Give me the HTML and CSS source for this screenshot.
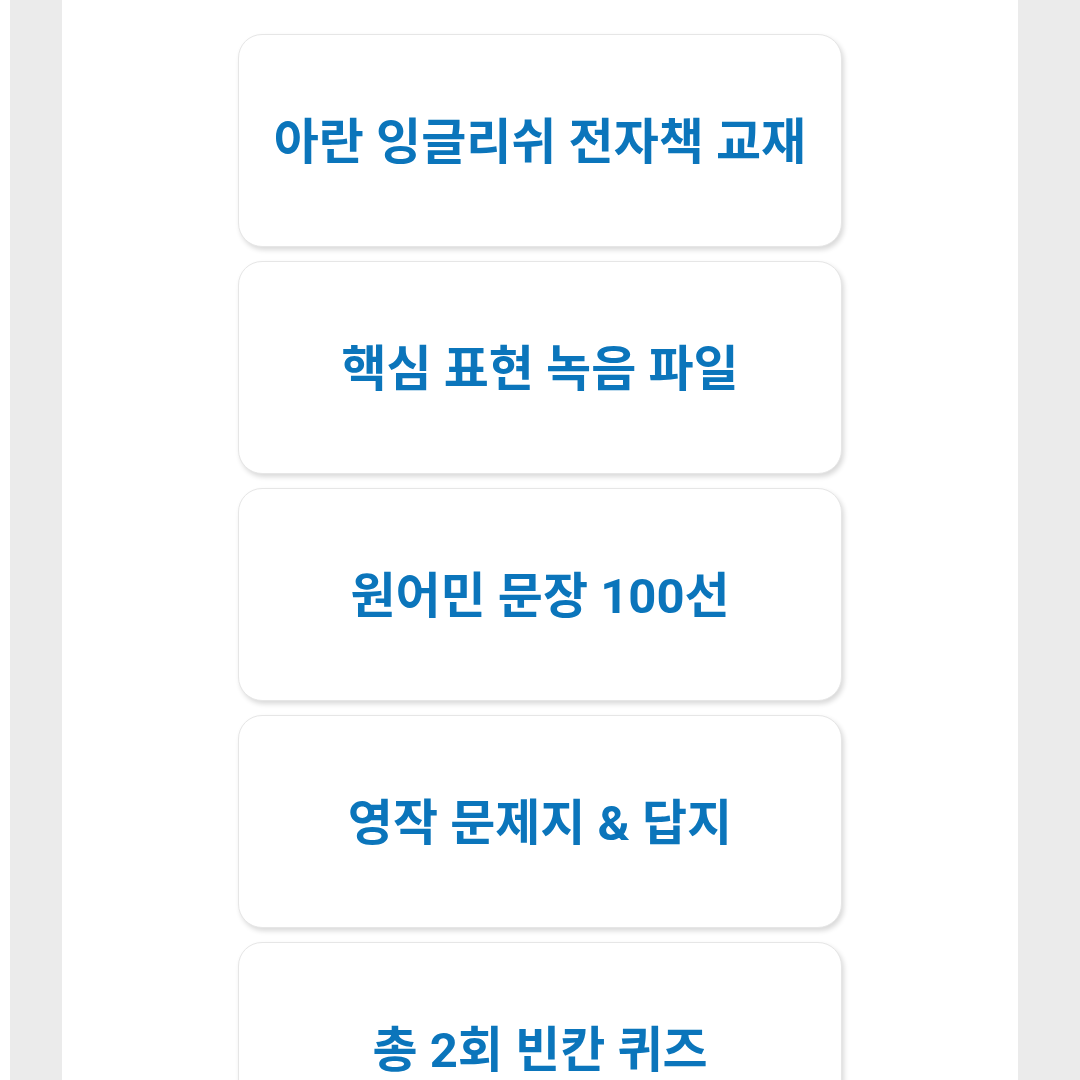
FILE: index.html
```html
<!DOCTYPE html>
<html lang="ko">
<head>
    <meta charset="UTF-8">
    <meta name="viewport" content="width=device-width, initial-scale=1.0">
    <title>아란 잉글리쉬 자료</title>
    <link rel="stylesheet" href="styles.css">
</head>
<body>
    <div class="frame">
        <div class="page">
            <div class="menu">
                <a class="card" href="#">아란 잉글리쉬 전자책 교재</a>
                <a class="card" href="#">핵심 표현 녹음 파일</a>
                <a class="card" href="#">원어민 문장 100선</a>
                <a class="card" href="#">영작 문제지 &amp; 답지</a>
                <a class="card" href="#">총 2회 빈칸 퀴즈</a>
            </div>
        </div>
    </div>
</body>
</html>
```

FILE: styles.css
```css
html, body {
    margin: 0;
    padding: 0;
    height: 100%;
    background-color: #fff;
    font-family: Roboto, "Noto Sans CJK KR", sans-serif;
    overflow: hidden;
}
.frame {
    margin-left: 10px;
    height: 100%;
    background-color: #ebebeb;
    padding: 0 62px 0 52px;
}
.page {
    height: 100%;
    background-color: #fff;
    padding-top: 34px;
}
.menu {
    width: 604px;
    margin: 0 auto;
    display: flex;
    flex-direction: column;
    gap: 14px;
}
.card {
    box-sizing: border-box;
    height: 213px;
    padding-bottom: 6px;
    display: flex;
    justify-content: center;
    align-items: center;
    background-color: #fff;
    border: 1px solid #e6e6e6;
    border-radius: 24px;
    box-shadow: 2px 3px 5px rgba(0, 0, 0, 0.15);
    color: #0b75bb;
    font-size: 49px;
    font-weight: 700;
    text-decoration: none;
}
```
